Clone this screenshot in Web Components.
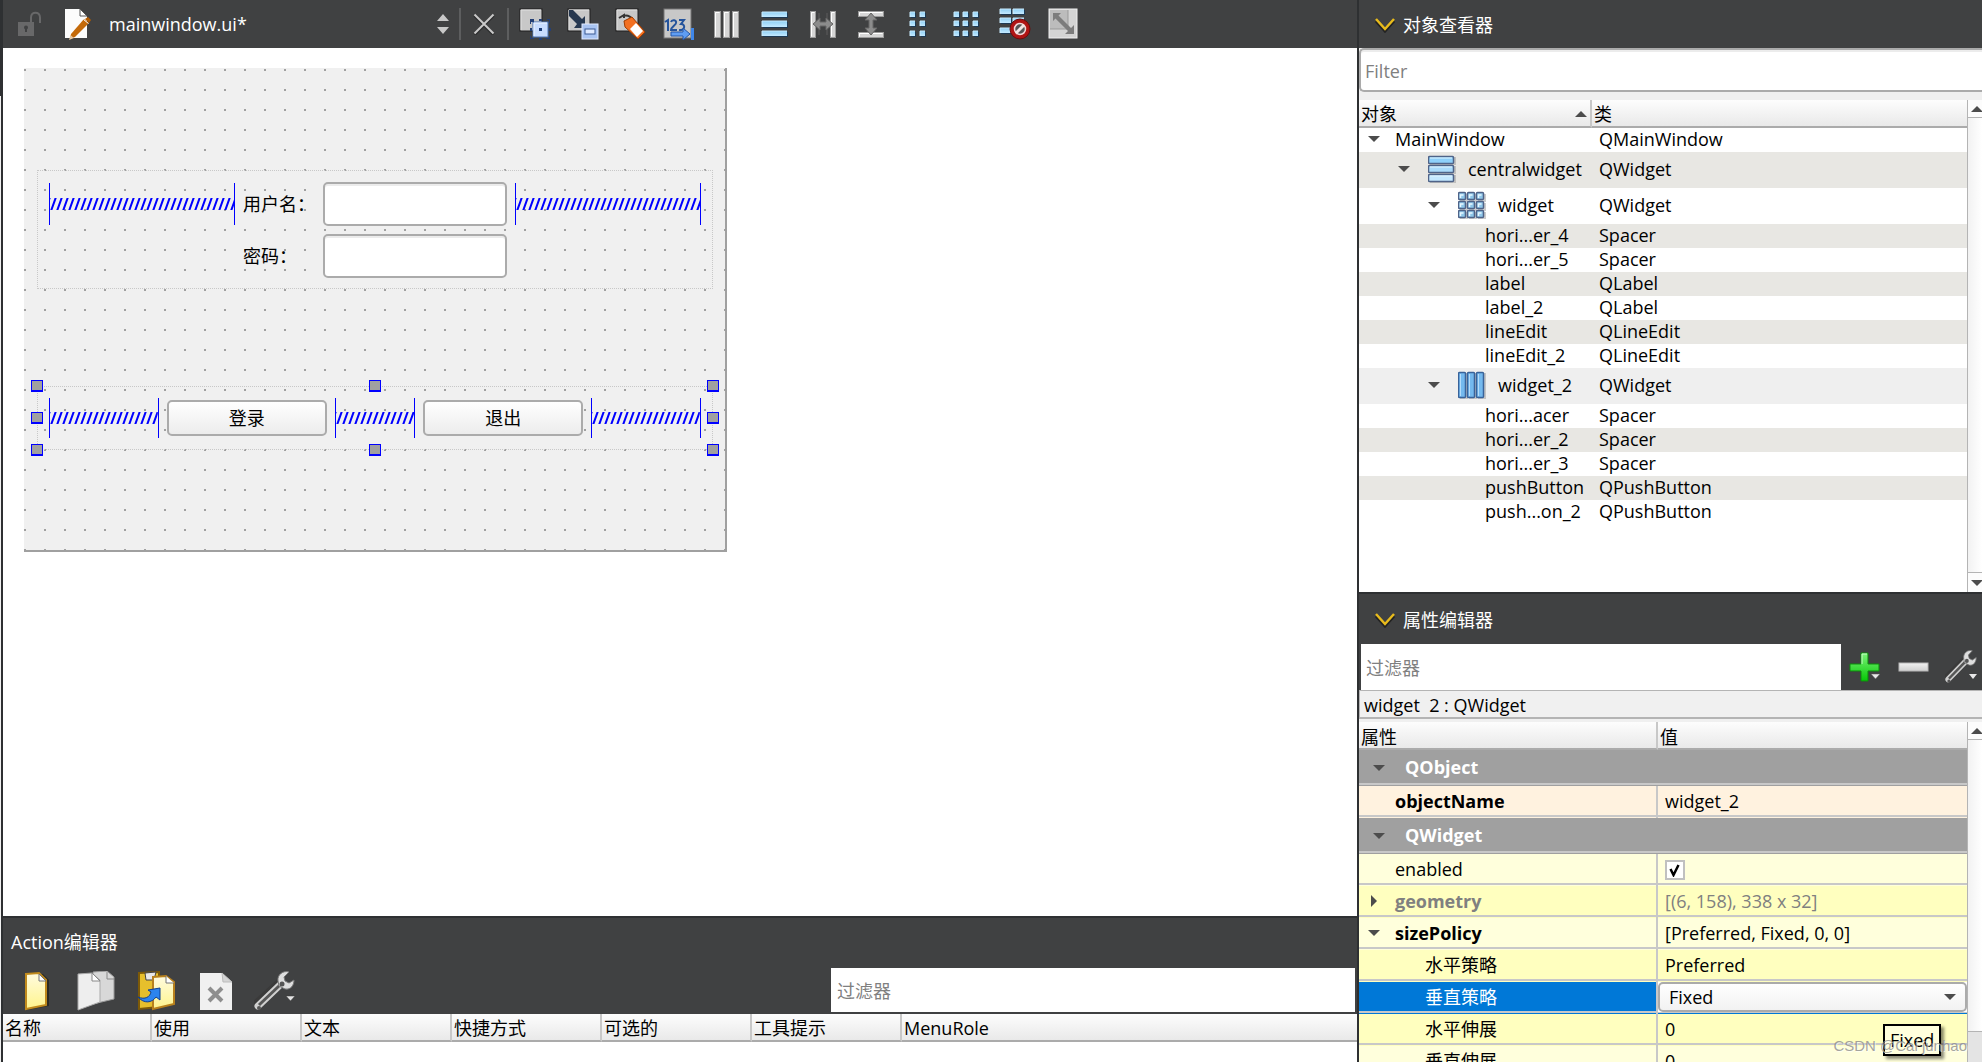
<!DOCTYPE html>
<html lang="zh-CN">
<head>
<meta charset="utf-8">
<title>mainwindow.ui - Designer</title>
<style>
  html, body { margin: 0; height: 100%; }
  body { font: 18px/24px "Open Sans", "Noto Sans CJK SC", sans-serif; color: #000; background: #fff; overflow: hidden; }
</style>
</head>
<body>
<designer-app></designer-app>
<script>
const BASE = `
  *, *::before { box-sizing: border-box; }
  button, input, select { font: inherit; color: inherit; margin: 0; padding: 0; border: 0; background: none; border-radius: 0; outline: 0; }
  input::placeholder { color: #808080; opacity: 1; }
  table { border-collapse: separate; border-spacing: 0; table-layout: fixed; width: 100%; }
  th, td { padding: 0; text-align: left; font-weight: 400; white-space: nowrap; overflow: hidden; }
  button { display: flex; align-items: center; justify-content: center; }
`;
function define(name, css, html) {
  const tpl = document.createElement('template');
  tpl.innerHTML = `<style>${BASE}${css}</style>${typeof html === 'string' ? html : ''}`;
  customElements.define(name, class extends HTMLElement {
    constructor() { super(); this.attachShadow({ mode: 'open' }); }
    connectedCallback() {
      if (this.shadowRoot.childNodes.length) return;
      this.shadowRoot.append(tpl.content.cloneNode(true));
      if (typeof html === 'function') this.shadowRoot.innerHTML += html(this);
    }
  });
}

/* ---------- icons ---------- */
const blueCell = (x, y, w, h) => `<rect x="${x + 1}" y="${y + 1}" width="${w}" height="${h}" fill="#1d3954"/><rect x="${x}" y="${y}" width="${w}" height="${h}" fill="url(#b)"/><path d="M${x} ${y + h}V${y}h${w}" fill="none" stroke="#c9ecff"/>`;
const grayBar = (x, y, w, h) => `<rect x="${x}" y="${y}" width="${w}" height="${h}" fill="#d6d6d6" stroke="#9a9a9a"/><path d="M${x + 1} ${y + h - 1}V${y + 1}h${w - 2}" fill="none" stroke="#fff"/>`;
const DEFS = `<defs>
  <linearGradient id="b" x1="0" y1="0" x2="0" y2="1"><stop offset="0" stop-color="#8fd0f5"/><stop offset="1" stop-color="#c4e9ff"/></linearGradient>
  <linearGradient id="g" x1="0" y1="0" x2="0" y2="1"><stop offset="0" stop-color="#f2f2f2"/><stop offset="1" stop-color="#cfcfcf"/></linearGradient>
  <linearGradient id="y" x1="0" y1="0" x2="0" y2="1"><stop offset="0" stop-color="#fffbe0"/><stop offset="1" stop-color="#fff48c"/></linearGradient>
  <linearGradient id="gr" x1="0" y1="0" x2="0" y2="1"><stop offset="0" stop-color="#7df27a"/><stop offset="1" stop-color="#06c806"/></linearGradient>
</defs>`;
const square = `<rect x="1" y="1" width="22" height="22" fill="#c8c8c8" stroke="#1f1f1f"/><path d="M2 22V2h20" fill="none" stroke="#e2e2e2"/>`;
const wrench = `<path d="M2 33L25 12" stroke="#3a3a3a" stroke-width="8" stroke-linecap="round" fill="none"/><path d="M4 35L27 13" stroke="#d0d0d0" stroke-width="7" stroke-linecap="round"/><path d="M5 34L26 14" stroke="#565656" stroke-width="3"/><path d="M37 1c-6-2-12 3-11 9l1 5 6 3c6 1 9-4 9-9l-5 3-4-2-1-4z" fill="#dedede" stroke="#777" transform="translate(-2 0)"/><circle cx="28" cy="13" r="2.5" fill="#555"/><circle cx="5" cy="37" r="2" fill="#555"/>`;
const ICONS = {
  lock: [26, 26, `<path d="M14 12V6.500C14 0 23 0 23 6.500V12" fill="none" stroke="#686869" stroke-width="2"/><rect x="1" y="11" width="16" height="14" fill="#686869"/><circle cx="9" cy="16.500" r="2" fill="#404142"/><path d="M9 17v4" stroke="#404142" stroke-width="2"/>`],
  uifile: [30, 32, `<path d="M2 1h15l7 7v22H2z" fill="#fcfcfc"/><path d="M17 1v7h7z" fill="#fff" stroke="#555"/><path d="M7 31l1-5L21 11l5 4L12 29z" fill="#c46a0a"/><path d="M22 11l3-2 3 3-2 3z" fill="#b35c00"/><path d="M6 32l1.500-5 3.500 3z" fill="#e6c7a0"/><path d="M20.500 11.500l5 4" stroke="#fff"/>`],
  updown: [14, 22, `<path d="M1 8L7 1l6 7zM1 14l6 7 6-7z" fill="#c8c8c8"/>`],
  close: [22, 22, `<path d="M1.500 1.500l19 19M20.500 1.500l-19 19" stroke="#2b2c2d" stroke-width="3" transform="translate(0 1)"/><path d="M1.500 1.500l19 19M20.500 1.500l-19 19" stroke="#c9c9c9" stroke-width="2"/>`],
  widgets: [32, 32, square + `<rect x="14" y="14" width="15" height="15" fill="#c8dcff" stroke="#4a74b8"/><path d="M15 28V15h13" stroke="#eef5ff" fill="none"/><path d="M20 20h3v3h-3z" fill="#1b3c78"/><path d="M11 11h4v3h-3v2h-1zM28 11h3v4h-1v-3h-2zM11 28v3h4v-1h-3v-2zM31 28v3h-4v-1h3v-2zM20 11h3v2h-3zM20 30h3v2h-3zM11 20h2v3h-2zM30 20h2v3h-2z" fill="#243f75"/>`],
  signals: [32, 32, square + `<path d="M2 2l4 0 9 9 3-3v12H7l3-4-8-8z" fill="#263850"/><rect x="15" y="16" width="16" height="15" fill="#a9c4f2" stroke="#e2ecff"/><rect x="18" y="21" width="10" height="5" fill="#dfeaff" stroke="#3a5a94"/>`],
  buddies: [32, 32, square + `<path d="M4 10l5-3v3M8 8q6-2 10 4" stroke="#333" stroke-width="2" fill="none"/><path d="M9 13l8-4 13 15-7 7L10 19z" fill="#f37021" stroke="#a03c00"/><path d="M21 15l7 8-6 6-7-8z" fill="#fff"/>`],
  taborder: [32, 32, `<rect x="1" y="1" width="27" height="29" fill="#c8c8c8" stroke="#777"/><g fill="none" stroke="#25549c" stroke-width="2"><path d="M2 14l3-2v11"/><path d="M8 14c1-3 6-2 5 1 0 2-5 4-5 7h6"/><path d="M16 12h5l-3 4c5 0 4 7-2 6"/></g><path d="M8 24h12v-4l7 6-7 6v-4H8z" fill="#5f9df2" stroke="#2456a8"/><path d="M29.500 20v12" stroke="#3f86e8" stroke-width="3"/>`],
  hlay: [32, 32, grayBar(3.5, 3.5, 6, 26) + grayBar(12.500, 3.5, 6, 26) + grayBar(21.500, 3.5, 6, 26)],
  vlay: [32, 32, blueCell(3, 4, 25, 5) + blueCell(3, 13, 25, 6) + blueCell(3, 23, 25, 5)],
  hsplit: [32, 32, grayBar(3.5, 3.5, 5, 26) + grayBar(23.500, 3.5, 5, 26) + `<path d="M12 5v22M20 5v22" stroke="#5d5d5d"/><path d="M6 16l7-6v4h6v-4l7 6-7 6v-4h-6v4z" fill="#8c8c8c" stroke="#666"/>`],
  vsplit: [32, 32, grayBar(3.5, 3.5, 25, 5) + grayBar(3.5, 24.500, 25, 5) + `<path d="M16 5l6 7h-4v8h4l-6 7-6-7h4v-8h-4z" fill="#8c8c8c" stroke="#666"/>`],
  form: [32, 32, [4, 13, 23].map(y => blueCell(7, y, 5, 5) + blueCell(17, y, 5, 5)).join('')],
  grid: [32, 32, [4, 13, 23].map(y => blueCell(3, y, 5, 5) + blueCell(12, y, 5, 5) + blueCell(22, y, 5, 5)).join('')],
  breaklay: [32, 32, [1, 10, 20].map(y => blueCell(1, y, 11, 5) + blueCell(14, y, 11, 5)).join('') + `<circle cx="21" cy="21" r="10" fill="#b01414" stroke="#6b0d0d"/><circle cx="21" cy="21" r="5.500" fill="#555" stroke="#f2d8d8" stroke-width="1.500"/><path d="M17 25l8-8" stroke="#f4e4e4" stroke-width="3"/>`],
  adjust: [32, 32, `<rect x="2" y="1" width="28" height="29" fill="#d4d4d4" stroke="#f0f0f0"/><path d="M3 2h18v19H3z" fill="#bcbcbc"/><path d="M3 21h18V2" fill="none" stroke="#999"/><path d="M6 5h8l-2.500 2.500L24 20l3-3v9h-9l3-3L8.500 10.500 6 13z" fill="#7c7c7c"/>`],
  newaction: [40, 40, `<path d="M11 3l16 0 6 6v26L11 39z" fill="#1e1a10" opacity=".6"/><path d="M10 3l13-1 7 7v25L10 38z" fill="url(#y)" stroke="#c08a1c" stroke-width="2"/><path d="M23 3v7h7z" fill="#fff" stroke="#777"/>`],
  copy: [40, 40, `<path d="M17 1l14-1 7 6v22l-21 5z" fill="#d8d8d8" stroke="#999"/><path d="M31 1v7h7" fill="none" stroke="#888"/><path d="M2 3l14-1 8 7v22L2 39z" fill="#eee" stroke="#aaa"/><path d="M16 2v8h8z" fill="#fff" stroke="#888"/>`],
  paste: [40, 40, `<path d="M3 2l20-1v35L3 38z" fill="#e6bf2c" stroke="#7d5a08" stroke-width="2"/><path d="M9 2l11-1-2 8h-8z" fill="#e8e8e8" stroke="#444"/><path d="M17 6l13-1 8 6v22l-21 5z" fill="url(#y)" stroke="#b8801c" stroke-width="2"/><path d="M30 5v7h8" fill="#fff" stroke="#777"/><path d="M2 26c7 3 12 0 13-5l-3-2 12-2v12l-4-3c-4 6-12 7-18 0z" fill="#2c84ee" stroke="#0f3f90"/>`],
  del: [40, 40, `<path d="M4 2h22l10 9v28H4z" fill="#f0f0f0"/><path d="M26 2l10 9h-9z" fill="#d5d5d5" stroke="#bbb"/><path d="M13 17l13 13M26 17L13 30" stroke="#8e8e8e" stroke-width="4"/>`],
  wrench: [44, 40, wrench + `<path d="M32 25h9l-4.500 5z" fill="#e4e4e4" stroke="#3a3a3a" stroke-width=".5"/>`],
  wrenchs: [34, 34, `<g transform="scale(.78 .84)">${wrench}</g><path d="M24 24h8l-4 5z" fill="#e8e8e8"/>`],
  plus: [34, 34, `<path d="M12 3h7v11h11v7H19v10h-7V21H1v-7h11z" fill="url(#gr)" stroke="#0a8f0a"/><path d="M13 14V4h5" stroke="#c8ffc8" fill="none"/><path d="M22 24h9l-4.500 5z" fill="#e8e8e8" stroke="#555" stroke-width=".5"/>`],
  minus: [34, 34, `<rect x="2" y="13" width="29" height="8" fill="url(#g)" stroke="#b8b8b8"/>`],
  chevron: [22, 16, `<path d="M2 2l9 10 9-10" fill="none" stroke="#222" stroke-width="3" transform="translate(0 2)"/><path d="M2 2l9 10 9-10" fill="none" stroke="#e8bb1c" stroke-width="2.500"/>`],
  tvlay: [28, 28, [1, 10, 19].map((y, i) => `<rect x="2" y="${y + 1}" width="26" height="8" fill="#999" opacity=".5"/><rect x=".5" y="${y}.5" width="25" height="7" rx="1" fill="${['#8ed0fa', '#aadbfb', '#c4e8ff'][i]}" stroke="#4f6388" stroke-width="1.500"/><path d="M2 ${y + 2}h22" stroke="#e0f4ff"/>`).join('')],
  tgrid: [28, 28, [1, 10, 19].map(y => [0, 9, 18].map(x => `<rect x="${x + 2}" y="${y + 2}" width="8" height="8" fill="#999" opacity=".5"/><rect x="${x}.5" y="${y}.5" width="7" height="7" rx="1" fill="#8fc7ea" stroke="#4f6388" stroke-width="1.500"/><path d="M${x + 2.5} ${y + 6}v-3h3" stroke="#e6f7ff" stroke-width="1.500" fill="none"/>`).join('')).join('')],
  thlay: [28, 28, [0, 9, 18].map(x => `<rect x="${x + 2}" y="2" width="8" height="26" fill="#999" opacity=".5"/><rect x="${x}.5" y="1.500" width="7" height="25" rx="1" fill="#74b9ee" stroke="#39639a" stroke-width="1.500"/><path d="M${x + 2.5} 25V3" stroke="#b4dcfa"/>`).join('')],
};
define('ui-icon', `:host{display:block;flex:none} svg{display:block}`, el => {
  const [w, h, body] = ICONS[el.getAttribute('name')];
  return `<svg width="${w}" height="${h}" viewBox="0 0 ${w} ${h}" aria-hidden="true">${DEFS}${body}</svg>`;
});

/* small triangle used by trees, headers and scroll bars */
define('tri-mark', `:host{display:block;flex:none;width:12px;height:12px} svg{display:block}`, el => {
  const d = { down: 'M0 3h12L6 9z', up: 'M0 9h12L6 3z', right: 'M3 0v12l6-6z' }[el.getAttribute('dir') || 'down'];
  return `<svg width="12" height="12" viewBox="0 0 12 12" aria-hidden="true"><path d="${d}" fill="#4c4c4c"/></svg>`;
});

/* ---------- horizontal spacer ---------- */
define('h-spring', `
  :host { display: flex; align-items: center; min-width: 0; border: solid #00f; border-width: 0 1px; }
  svg { display: block; width: 100%; height: 12px; }`,
  `<svg aria-hidden="true"><defs><pattern id="p" width="6" height="12" patternUnits="userSpaceOnUse"><path d="M-5 13L0 -1M1 13L6 -1M7 13L12 -1" stroke="#00f" stroke-width="2" fill="none"/></pattern></defs><rect width="100%" height="12" fill="url(#p)"/></svg>`);

/* ---------- dock title ---------- */
define('dock-title', `
  :host { box-sizing: border-box; display: flex; align-items: center; gap: 7px; padding: 1px 0 0 15px; background: #404142; color: #fff; flex: none; }`,
  `<ui-icon name="chevron"></ui-icon><slot></slot>`);

/* ---------- vertical scroll bar ---------- */
define('scroll-strip', `
  :host { display: flex; flex-direction: column; flex: none; width: 15px; box-sizing: border-box; background: linear-gradient(90deg,#f2f2f2,#fff); border-left: 1px solid #b4b4b4; overflow: hidden; }
  .b { height: 18px; padding-left: 3px; border-bottom: 1px solid #b4b4b4; background: #fcfcfc; display: flex; align-items: center; flex: none; }
  .t { flex: 1; }
  .end { height: 20px; border: solid #b4b4b4; border-width: 1px 0 0; }
  .rest { display: none; height: 31px; background: #e4e4e4; border-top: 1px solid #b4b4b4; }
  :host([part-way]) .end { display: none; } :host([part-way]) .rest { display: block; }`,
  `<div class="b"><tri-mark dir="up"></tri-mark></div><div class="t"></div><div class="rest"></div><div class="b end"><tri-mark></tri-mark></div>`);

/* ---------- editor toolbar ---------- */
define('editor-toolbar', `
  :host { display: flex; align-items: center; height: 48px; background: #404142; color: #fff; flex: none; }
  .lock { margin-left: 14px; }
  .doc { margin-left: 20px; }
  .file { display: flex; align-items: center; justify-content: space-between; width: 341px; margin: 0 9px 0 16px; }
  .sep { width: 2px; height: 32px; background: #5d5e5f; }
  .x { width: 46px; height: 32px; }
  .tools { display: flex; gap: 16px; margin-left: 10px; }`,
  `<button class="lock" aria-label="lock"><ui-icon name="lock"></ui-icon></button>
   <ui-icon class="doc" name="uifile"></ui-icon>
   <button class="file"><span>mainwindow.ui*</span><ui-icon name="updown"></ui-icon></button>
   <span class="sep"></span>
   <button class="x" aria-label="close"><ui-icon name="close"></ui-icon></button>
   <span class="sep"></span>
   <div class="tools">${['widgets', 'signals', 'buddies', 'taborder', 'hlay', 'vlay', 'hsplit', 'vsplit', 'form', 'grid', 'breaklay', 'adjust'].map(n => `<button aria-label="${n}"><ui-icon name="${n}"></ui-icon></button>`).join('')}</div>`);

/* ---------- the form being designed ---------- */
define('form-canvas', `
  :host { display: block; flex: 1; min-height: 0; background: #fff; padding: 20px 0 0 21px; overflow: hidden; }
  .win { width: 703px; height: 484px; padding: 102px 12px 0 13px; border: solid #a0a0a0; border-width: 0 2px 2px 0;
    background: conic-gradient(from 270deg at 2px 2px, #a0a0a0 90deg, transparent 0) 0 1px / 20px 20px padding-box, #f0f0f0 padding-box; }
  .box { border: 1px dotted #c8c8c8; }
  .grid { display: grid; grid-template-columns: 1fr 72px 184px 1fr; grid-template-rows: 44px 44px; gap: 8px; padding: 11px 11px 10px; }
  .grid h-spring { height: 42px; align-self: center; }
  label { align-self: center; }
  input { min-width: 0; height: 44px; background: #fff; border: 2px solid #ababab; border-radius: 5px; box-shadow: inset 0 2px #ececec; padding: 0 8px; }
  .c2 { grid-column: 2; }
  .row { position: relative; display: flex; align-items: center; gap: 8px; height: 64px; margin-top: 97px; padding: 0 11px; }
  .row h-spring { flex: 110 1 0; height: 40px; }
  .row h-spring.mid { flex-grow: 80; }
  .row button { width: 160px; height: 36px; border: 2px solid #ababab; border-radius: 5px; background: linear-gradient(#fff,#ececec); }
  .handles { position: absolute; inset: -1px; }
  .handles i { position: absolute; width: 12px; height: 12px; background: #a0a0a0; border: solid #00f; border-width: 1px 1px 2px; transform: translate(-50%,-50%); }`,
  `<div class="win">
    <div class="box grid">
      <h-spring></h-spring><label for="user">用户名：</label><input id="user" type="text"><h-spring></h-spring>
      <label class="c2" for="pass">密码：</label><input id="pass" type="text">
    </div>
    <div class="box row">
      <h-spring></h-spring><button>登录</button><h-spring class="mid"></h-spring><button>退出</button><h-spring></h-spring>
      <div class="handles">${[[0, 0], [50, 0], [100, 0], [0, 50], [100, 50], [0, 100], [50, 100], [100, 100]].map(([x, y]) => `<i style="left:${x}%;top:${y}%"></i>`).join('')}</div>
    </div>
  </div>`);

const HEAD = `
  th { height: 28px; padding: 2px 0 0 2px; line-height: 22px; background: linear-gradient(#fdfdfd,#e9e9e9); border-bottom: 2px solid #ababab; }
  th:not(:last-child) { border-right: 2px solid #c8c8c8; }`;

/* ---------- action editor ---------- */
define('action-editor', `
  :host { display: flex; flex-direction: column; flex: none; border-top: 2px solid #2e3032; background: #404142; }
  .title { height: 50px; padding: 12px 8px; color: #fff; }
  .bar { display: flex; align-items: center; gap: 20px; height: 46px; padding: 0 2px 0 13px; }
  .bar button { width: 40px; height: 40px; }
  .bar input { flex: none; width: 524px; height: 44px; margin-left: auto; margin-bottom: 2px; background: #fff; padding: 2px 6px 0; }
  .list { background: #fff; min-height: 48px; }
  ${HEAD}`,
  `<div class="title">Action编辑器</div>
   <div class="bar">${[['newaction', '新建'], ['copy', '复制'], ['paste', '粘贴'], ['del', '删除'], ['wrench', '配置']].map(([n, l]) => `<button aria-label="${l}"><ui-icon name="${n}"></ui-icon></button>`).join('')}
     <input type="text" placeholder="过滤器" aria-label="过滤器"></div>
   <div class="list"><table><colgroup><col style="width:149px">${'<col style="width:150px">'.repeat(5)}<col></colgroup><thead><tr>${['名称', '使用', '文本', '快捷方式', '可选的', '工具提示', 'MenuRole'].map(t => `<th>${t}</th>`).join('')}</tr></thead></table></div>`);

/* ---------- object inspector ---------- */
const TREE = [
  ['MainWindow', 'QMainWindow', 0], ['centralwidget', 'QWidget', 1, 'tvlay'], ['widget', 'QWidget', 2, 'tgrid'],
  ['hori...er_4', 'Spacer', 3], ['hori...er_5', 'Spacer', 3], ['label', 'QLabel', 3], ['label_2', 'QLabel', 3],
  ['lineEdit', 'QLineEdit', 3], ['lineEdit_2', 'QLineEdit', 3], ['widget_2', 'QWidget', 2, 'thlay'],
  ['hori...acer', 'Spacer', 3], ['hori...er_2', 'Spacer', 3], ['hori...er_3', 'Spacer', 3],
  ['pushButton', 'QPushButton', 3], ['push...on_2', 'QPushButton', 3]];
define('object-inspector', `
  :host { display: flex; flex-direction: column; min-height: 0; }
  dock-title { height: 48px; }
  .f { background: #f0f0f0; padding-bottom: 8px; overflow: hidden; flex: none; }
  .f input { display: block; width: 100%; height: 44px; border: 2px solid #ababab; border-right: 0; border-radius: 5px 0 0 5px; background: #fff; padding: 2px 4px 0; box-shadow: inset 0 2px #ececec; }
  .body { flex: 1; display: flex; min-height: 0; background: #fff; }
  .view { flex: 1; min-width: 0; overflow: hidden; }
  ${HEAD}
  .hd { display: flex; align-items: center; justify-content: space-between; padding-right: 3px; }
  td { height: 24px; line-height: 22px; padding-bottom: 2px; }
  td:last-child { padding-left: 7px; }
  tr.big td { height: 36px; }
  tr.alt td { background: #e8e7e3; } tr.sel td { background: #efefef; }
  .n { display: flex; align-items: center; }
  .n tri-mark { margin-right: 15px; }
  .n ui-icon { margin: 0 12px 0 3px; }
  .l0 { padding-left: 9px; } .l1 { padding-left: 39px; } .l2 { padding-left: 69px; } .l3 { padding-left: 126px; }`,
  `<dock-title>对象查看器</dock-title>
   <div class="f"><input type="text" placeholder="Filter" aria-label="Filter"></div>
   <div class="body"><div class="view"><table><colgroup><col style="width:233px"><col></colgroup>
     <thead><tr><th><div class="hd">对象<tri-mark dir="up"></tri-mark></div></th><th>类</th></tr></thead>
     <tbody>${TREE.map(([n, c, l, ic], i) => `<tr class="${ic ? 'big' : ''} ${n === 'widget_2' ? 'sel' : i % 2 ? 'alt' : ''}"><td><div class="n l${l}">${l < 3 ? '<tri-mark></tri-mark>' : ''}${ic ? `<ui-icon name="${ic}"></ui-icon>` : ''}<span>${n}</span></div></td><td>${c}</td></tr>`).join('')}</tbody>
   </table></div><scroll-strip></scroll-strip></div>`);

/* ---------- property editor ---------- */
define('property-editor', `
  :host { display: flex; flex-direction: column; min-height: 0; position: relative; }
  dock-title { height: 52px; border-top: 2px solid #2e3032; }
  .bar { display: flex; align-items: center; height: 46px; background: #404142; padding-left: 2px; flex: none; overflow: hidden; }
  .bar input { flex: 1; min-width: 0; height: 46px; background: #fff; padding: 2px 5px 0; }
  .btns { display: flex; gap: 14px; padding: 0 3px 0 8px; }
  .sel { flex: none; height: 32px; background: #f0f0f0; }
  .sel div { height: 29px; padding: 2px 4px 0; border: solid #b4b4b4; border-width: 1px 0 2px 1px; white-space: pre; }
  .body { flex: 1; display: flex; min-height: 0; background: #fff; }
  .view { flex: 1; min-width: 0; overflow: hidden; }
  ${HEAD}
  th { padding-top: 3px; }
  td { height: 32px; background: linear-gradient(#c8c8c8,#c8c8c8) 0 calc(100% - 1px) / 100% 2px no-repeat var(--bg); line-height: 30px; vertical-align: top; }
  td + td { padding-left: 7px; }
  tr:not(.grp) td:first-child { border-right: 2px solid #c8c8c8; }
  td:first-child { padding-left: 36px; }
  .grp td:first-child { height: 36px; --bg: #a0a0a0; color: #fff; font-weight: 700; line-height: 35px; padding-left: 14px; }
  .a { --bg: #fff2df; } .y1 { --bg: #ffffdc; } .y2 { --bg: #ffffbf; }
  b { font-weight: 700; }
  .n { display: flex; align-items: center; }
  .grp .n tri-mark { margin-right: 20px; }
  .x .n tri-mark { margin-right: 15px; }
  tr.x td:first-child { padding-left: 9px; }
  tr.sub td:first-child { padding-left: 66px; }
  .dim { color: #808080; }
  tr.on td:first-child { --bg: #0078d7; color: #fff; }
  tr.on td:last-child { padding: 0; --bg: #0078d7; }
  .cmb { display: flex; align-items: center; position: relative; height: 30px; background: #fff; }
  select { appearance: none; width: 100%; height: 30px; border: 2px solid #ababab; border-radius: 5px; background: linear-gradient(#fff,#f2f2f2); padding: 0 9px; line-height: 24px; }
  .cmb tri-mark { position: absolute; right: 11px; top: 9px; }
  .chk { position: relative; display: block; width: 20px; }
  .chk svg { position: absolute; left: 3px; top: 3px; }
  input[type=checkbox] { appearance: none; display: block; width: 20px; height: 20px; margin-top: 6px; border: 2px solid #c0c0c0; background: #fff; }
  .tip { position: absolute; right: 41px; bottom: 6px; width: 58px; height: 32px; line-height: 28px; padding-left: 5px; border: 2px solid #000; background: #ffffdc; box-shadow: 3px 3px 3px #0007; }
  .mark { position: absolute; right: 15px; bottom: 6px; font: 15px/20px "Liberation Sans", "Noto Sans", sans-serif; color: #8c8c8ccc; text-shadow: 1px 1px #fff9; white-space: nowrap; }`,
  `<dock-title>属性编辑器</dock-title>
   <div class="bar"><input type="text" placeholder="过滤器" aria-label="过滤器">
     <div class="btns"><button aria-label="添加"><ui-icon name="plus"></ui-icon></button><button aria-label="移除"><ui-icon name="minus"></ui-icon></button><button aria-label="配置"><ui-icon name="wrenchs"></ui-icon></button></div></div>
   <div class="sel"><div>widget  2 : QWidget</div></div>
   <div class="body"><div class="view"><table><colgroup><col style="width:299px"><col></colgroup>
     <thead><tr><th>属性</th><th>值</th></tr></thead>
     <tbody>
       <tr class="grp"><td colspan="2"><div class="n"><tri-mark></tri-mark>QObject</div></td></tr>
       <tr class="a"><td><b>objectName</b></td><td>widget_2</td></tr>
       <tr class="grp"><td colspan="2"><div class="n"><tri-mark></tri-mark>QWidget</div></td></tr>
       <tr class="y1"><td><label for="en">enabled</label></td><td><span class="chk"><input id="en" type="checkbox" checked><svg width="14" height="14" viewBox="0 0 14 14" aria-hidden="true"><path d="M2.500 6l3 6 5-10" fill="none" stroke="#000" stroke-width="2.500"/></svg></span></td></tr>
       <tr class="y2 x dim"><td><div class="n"><tri-mark dir="right"></tri-mark><b>geometry</b></div></td><td>[(6, 158), 338 x 32]</td></tr>
       <tr class="y1 x"><td><div class="n"><tri-mark></tri-mark><b>sizePolicy</b></div></td><td>[Preferred, Fixed, 0, 0]</td></tr>
       <tr class="y2 sub"><td>水平策略</td><td>Preferred</td></tr>
       <tr class="y1 sub on"><td><label for="vp">垂直策略</label></td><td><div class="cmb"><select id="vp"><option>Fixed</option><option>Preferred</option></select><tri-mark></tri-mark></div></td></tr>
       <tr class="y2 sub"><td>水平伸展</td><td>0</td></tr>
       <tr class="y1 sub"><td>垂直伸展</td><td>0</td></tr>
     </tbody></table></div><scroll-strip part-way></scroll-strip></div>
   <div class="tip" role="tooltip">Fixed</div>
   <div class="mark">CSDN @Cai junhao</div>`);

/* ---------- application shell ---------- */
define('designer-app', `
  :host { display: grid; grid-template-columns: 3px minmax(0,1fr) 625px; height: 100vh; overflow: hidden; }
  .edge { border-right: 2px solid #2e3032; background: linear-gradient(#2e3032 96px,#f0f0f0 0); }
  main, aside { display: flex; flex-direction: column; min-width: 0; min-height: 0; }
  aside { border-left: 2px solid #2e3032; }
  object-inspector { flex: 592 1 0; } property-editor { flex: 470 1 0; }`,
  `<div class="edge"></div>
   <main><editor-toolbar></editor-toolbar><form-canvas></form-canvas><action-editor></action-editor></main>
   <aside><object-inspector></object-inspector><property-editor></property-editor></aside>`);
</script>
</body>
</html>
